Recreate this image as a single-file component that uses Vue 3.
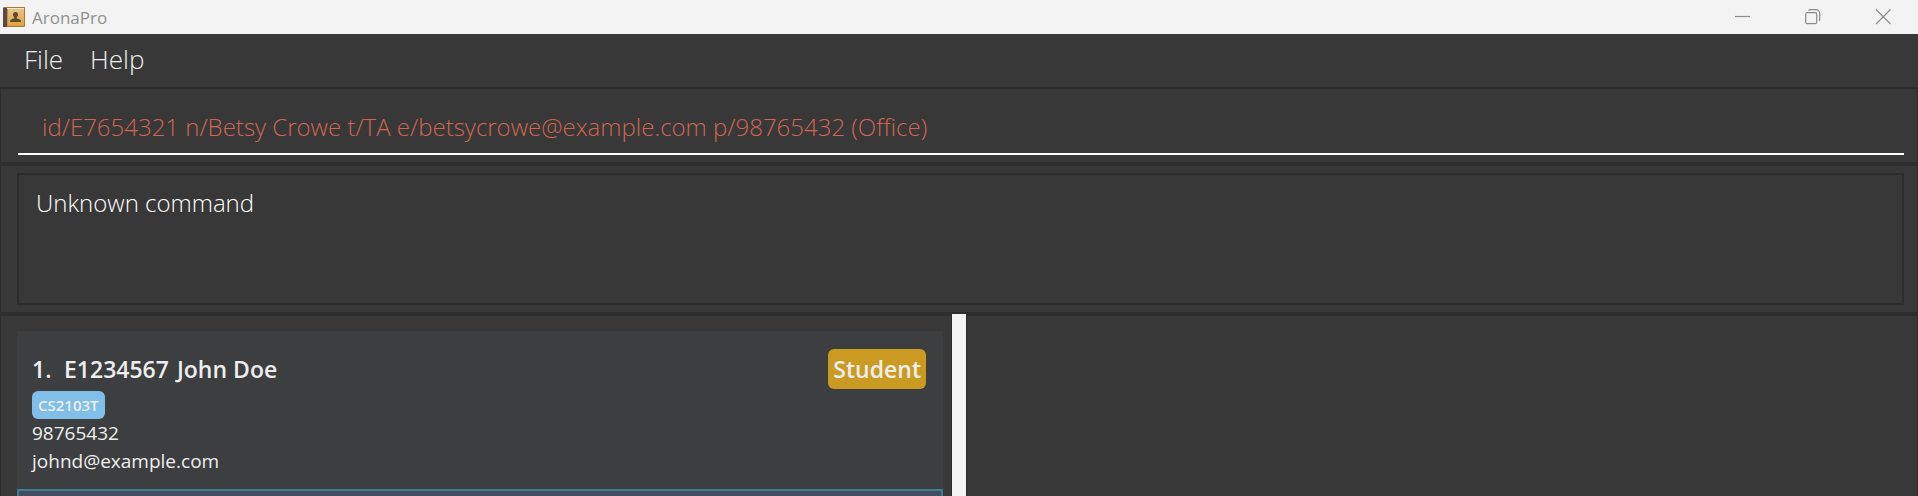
<script setup>
import { ref } from 'vue'

const command = ref('id/E7654321 n/Betsy Crowe t/TA e/betsycrowe@example.com p/98765432 (Office)')
const result = ref('Unknown command')
const menus = ['File', 'Help']
const persons = [
  { index: 1, id: 'E1234567', name: 'John Doe', role: 'Student', module: 'CS2103T', phone: '98765432', email: 'johnd@example.com' },
]
</script>

<template>
  <div class="window">
    <header class="titlebar">
      <svg class="app-icon" viewBox="0 0 22 20" aria-hidden="true">
        <defs>
          <linearGradient id="cover" x1="0" y1="0" x2="0" y2="1">
            <stop offset="0" stop-color="#e6c68c" />
            <stop offset="1" stop-color="#dda443" />
          </linearGradient>
        </defs>
        <rect x="0" y="0" width="22" height="20" rx="1" fill="#a9782f" />
        <rect x="4" y="1" width="17" height="18" fill="url(#cover)" />
        <rect x="1" y="1" width="20" height="1" fill="#f3ead6" />
        <rect x="0" y="1" width="4" height="19" fill="#5d4a48" />
        <rect x="4" y="2" width="1" height="17" fill="#c2934a" />
        <path d="M12.500 5c1.700 0 2.600 1.100 2.500 2.800-.1 1.200-.6 2-1.200 2.500v1.200c1.800.5 3.700.9 4.200 2.200v1.300H7v-1.300c.5-1.300 2.400-1.700 4.200-2.200v-1.200c-.6-.5-1.100-1.300-1.200-2.500C9.900 6.100 10.800 5 12.500 5z" fill="#5f4a2c" />
      </svg>
      <span class="title">AronaPro</span>
      <div class="controls">
        <button type="button" aria-label="Minimize">
          <svg viewBox="0 0 16 16"><path d="M0 7.500h15" /></svg>
        </button>
        <button type="button" aria-label="Restore">
          <svg viewBox="0 0 16 16">
            <rect x="0.700" y="3.700" width="11" height="11" rx="1.500" />
            <path d="M3.500 1.500C4 .9 4.500.7 5.200.7H11a3.700 3.700 0 0 1 3.700 3.700v5.800c0 .7-.3 1.200-.8 1.600" />
          </svg>
        </button>
        <button type="button" aria-label="Close">
          <svg viewBox="0 0 16 16"><path d="M1 .500l14.500 14.500M15.500 .5L1 15" /></svg>
        </button>
      </div>
    </header>

    <nav class="menubar" aria-label="Main menu">
      <button v-for="menu in menus" :key="menu" type="button">{{ menu }}</button>
    </nav>

    <section class="pane command-pane">
      <input v-model="command" class="command" type="text" aria-label="Command" spellcheck="false">
    </section>

    <section class="pane result-pane">
      <textarea v-model="result" class="result" readonly aria-label="Result" />
    </section>

    <main class="split">
      <section class="pane list-pane">
        <ul class="list">
          <li v-for="p in persons" :key="p.id" class="card">
            <div class="details">
              <h2 class="heading">
                <span class="index">{{ p.index }}.</span>
                <span class="id">{{ p.id }}</span>
                <span>{{ p.name }}</span>
              </h2>
              <span class="module">{{ p.module }}</span>
              <p>{{ p.phone }}</p>
              <p>{{ p.email }}</p>
            </div>
            <span class="role">{{ p.role }}</span>
          </li>
          <li class="card selected" />
        </ul>
      </section>
      <div class="divider" role="separator" aria-orientation="vertical" />
      <section class="pane detail-pane" />
    </main>
  </div>
</template>

<style>
body {
  background: #383838;
}
</style>

<style scoped>
.window {
  display: flex;
  flex-direction: column;
  height: 100vh;
  overflow: hidden;
  background: #383838;
  color: #eee;
  font-family: "Open Sans", "Noto Sans", sans-serif;
}

button {
  padding: 0;
  border: 0;
  background: none;
  color: inherit;
  font: inherit;
}

.titlebar {
  flex: none;
  display: flex;
  align-items: center;
  height: 34px;
  padding-left: 3px;
  background: #f3f3f3;
  color: #909090;
}

.app-icon {
  width: 22px;
  height: 20px;
}

.title {
  padding-top: 2px;
  margin-left: 7px;
  font-size: 17px;
  line-height: 32px;
}

.controls {
  display: flex;
  margin-left: auto;
}

.controls button {
  display: flex;
  align-items: center;
  justify-content: center;
  width: 70px;
  height: 34px;
}

.controls svg {
  width: 16px;
  height: 16px;
  fill: none;
  stroke: #8c8c8c;
  stroke-width: 1.2;
}

.menubar {
  flex: none;
  display: flex;
  gap: 27px;
  height: 53px;
  padding: 0 24px;
}

.menubar button {
  height: 50px;
  font-size: 26px;
  font-weight: 300;
  line-height: 50px;
}

.pane {
  box-sizing: border-box;
  border: solid #2d2d2d;
  border-width: 2px 1px;
}

.command-pane {
  flex: none;
  height: 77px;
  padding: 14px 13px 7px 17px;
}

.command {
  box-sizing: border-box;
  display: block;
  width: 100%;
  height: 52px;
  padding: 0 24px 4px;
  border: 0;
  border-bottom: 2px solid #fff;
  outline: 0;
  background: none;
  color: #d06651;
  font: 300 24px "Open Sans", "Noto Sans", sans-serif;
}

.result-pane {
  flex: none;
  height: 150px;
  padding: 7px 13px 7px 16px;
}

.result {
  box-sizing: border-box;
  display: block;
  width: 100%;
  height: 132px;
  padding: 10px 17px;
  border: 2px solid #2d2d2d;
  outline: 0;
  resize: none;
  background: none;
  color: #fff;
  font: 300 24px/36px "Open Sans", "Noto Sans", sans-serif;
}

.split {
  flex: 1;
  display: grid;
  grid-template-columns: minmax(0, 1fr) 14px minmax(0, 1fr);
  min-height: 0;
}

.list-pane,
.detail-pane {
  border-bottom: 0;
}

.list-pane {
  min-height: 0;
  padding: 15px 8px 0 16px;
  overflow: hidden;
}

.divider {
  background: #f4f4f4;
}

.list {
  margin: 0;
  padding: 0;
  list-style: none;
}

.card {
  box-sizing: border-box;
  display: flex;
  justify-content: space-between;
  align-items: flex-start;
  min-height: 158px;
  padding: 18px 17px 10px 15px;
  background: #3c3e3f;
}

.card.selected {
  border: 2px solid #3e7b91;
  background: #424d5f;
}

.heading {
  display: flex;
  margin: 0 0 2px;
  font-size: 23px;
  font-weight: 600;
  line-height: 40px;
}

.index {
  width: 32px;
}

.id {
  margin-right: 8px;
}

.module {
  display: block;
  width: fit-content;
  padding: 0 6px;
  border-radius: 6px;
  background: #80bfe8;
  font-size: 15px;
  font-weight: 600;
  line-height: 28px;
}

.details p {
  margin: 0;
  font-size: 19px;
  line-height: 28px;
}

.role {
  padding: 0 5px;
  border-radius: 6px;
  background: #cb9a22;
  font-size: 23px;
  font-weight: 600;
  line-height: 40px;
}
</style>
